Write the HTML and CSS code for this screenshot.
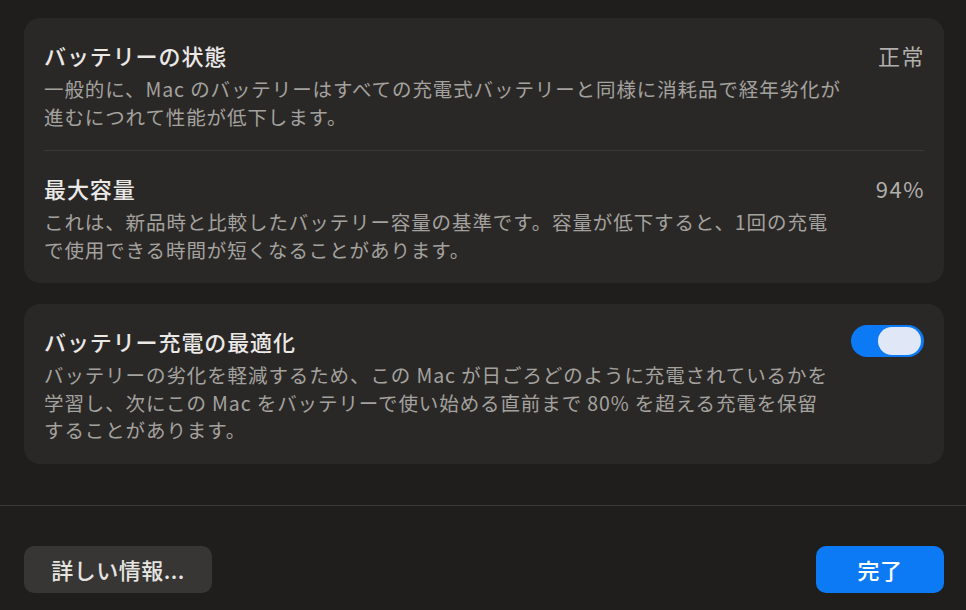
FILE: index.html
```html
<!DOCTYPE html>
<html lang="ja">
<head>
<meta charset="utf-8">
<link rel="stylesheet" href="styles.css">
</head>
<body>
<div class="sheet">
  <div class="content">
    <section class="card">
      <div class="row">
        <div class="text">
          <div class="title">バッテリーの状態</div>
          <div class="desc">一般的に、Mac のバッテリーはすべての充電式バッテリーと同様に消耗品で経年劣化が<br>進むにつれて性能が低下します。</div>
        </div>
        <div class="value">正常</div>
      </div>
      <div class="divider"></div>
      <div class="row">
        <div class="text">
          <div class="title">最大容量</div>
          <div class="desc">これは、新品時と比較したバッテリー容量の基準です。容量が低下すると、1回の充電<br>で使用できる時間が短くなることがあります。</div>
        </div>
        <div class="value">94%</div>
      </div>
    </section>
    <section class="card">
      <div class="row">
        <div class="text">
          <div class="title">バッテリー充電の最適化</div>
          <div class="desc">バッテリーの劣化を軽減するため、この Mac が日ごろどのように充電されているかを<br>学習し、次にこの Mac をバッテリーで使い始める直前まで 80% を超える充電を保留<br>することがあります。</div>
        </div>
        <div class="toggle"><span class="knob"></span></div>
      </div>
    </section>
  </div>
  <footer class="footer">
    <button class="btn btn-secondary">詳しい情報...</button>
    <button class="btn btn-primary">完了</button>
  </footer>
</div>
</body>
</html>
```
FILE: styles.css
```css
html, body {
  margin: 0;
  padding: 0;
  background: #1f1e1c;
}
body {
  width: 966px;
  height: 610px;
  overflow: hidden;
  font-family: "Noto Sans CJK JP", "Noto Sans", sans-serif;
  color: #e6e4e1;
}
.sheet {
  display: flex;
  flex-direction: column;
  height: 610px;
}
.content {
  padding: 18px 22px 0 24px;
  display: flex;
  flex-direction: column;
  gap: 21px;
}
.card {
  background: #2a2826;
  border-radius: 16px;
  padding: 0 20px;
}
.row {
  display: flex;
  justify-content: space-between;
  align-items: flex-start;
  padding: 22px 0 20px;
}
.divider {
  height: 1px;
  background: #3a3836;
}
.title {
  font-size: 22px;
  font-weight: 500;
  line-height: 30px;
  margin-bottom: 5px;
  color: #ebe9e6;
  letter-spacing: 0.9px;
}
.desc {
  font-size: 19.5px;
  line-height: 27.5px;
  color: #a4a29f;
  white-space: nowrap;
  letter-spacing: 0.9px;
}
.value {
  font-size: 22px;
  line-height: 30px;
  color: #b1afac;
  letter-spacing: 1.5px;
  margin-right: -1px;
}
.toggle {
  width: 73px;
  height: 32px;
  border-radius: 16px;
  background: #0b7af4;
  box-sizing: border-box;
  padding: 2px 3px;
  display: flex;
  justify-content: flex-end;
  margin-top: -1px;
}
.knob {
  width: 43px;
  height: 28px;
  border-radius: 14px;
  background: #e0e7f6;
}
.footer {
  margin-top: 41px;
  border-top: 1px solid #3a3836;
  padding: 40px 22px 0 24px;
  display: flex;
  justify-content: space-between;
}
.btn {
  font-family: "Noto Sans CJK JP", "Noto Sans", sans-serif;
  font-size: 22px;
  font-weight: 500;
  height: 47px;
  border: none;
  border-radius: 10px;
  padding: 0;
  line-height: 47px;
  letter-spacing: 0.5px;
  cursor: default;
}
.btn-secondary {
  width: 188px;
  background: #383634;
  color: #e6e4e1;
}
.btn-primary {
  width: 128px;
  background: #0b7af4;
  color: #ffffff;
}
```
